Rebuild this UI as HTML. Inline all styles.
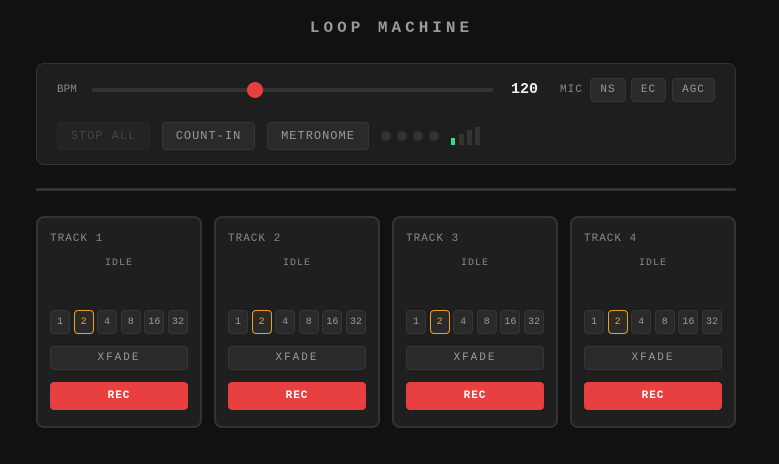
<!DOCTYPE html><html><head><style>
*{margin:0;padding:0;box-sizing:border-box}
body{width:779px;height:464px;background:#111;font-family:"Liberation Mono",monospace;position:relative;overflow:hidden;color:#888}
.a{position:absolute}
.btn{position:absolute;background:#2a2a2a;border:1px solid #363636;border-radius:4px;color:#999;font-size:11px;display:flex;align-items:center;justify-content:center;letter-spacing:1px}
.card{position:absolute;top:216px;width:166px;height:212px;background:#1f1f1f;border:2px solid #333;border-radius:8px}
</style></head><body>
<div class="a" style="left:0;width:779px;top:19px;text-align:center;font-size:16px;font-weight:bold;letter-spacing:4px;color:#999;padding-left:4px">LOOP MACHINE</div>
<div class="a" style="left:36px;top:63px;width:700px;height:102px;background:#1e1e1e;border:1px solid #333;border-radius:8px"></div>
<div class="a" style="left:57px;top:84px;font-size:11px;color:#888">BPM</div>
<div class="a" style="left:92px;top:88px;width:401px;height:4px;background:#333;border-radius:2px"></div>
<div class="a" style="left:247px;top:82px;width:16px;height:16px;background:#e84040;border-radius:50%"></div>
<div class="a" style="left:511px;top:81px;font-size:15px;font-weight:bold;color:#eee">120</div>
<div class="a" style="left:560px;top:84px;font-size:11px;color:#888;letter-spacing:1px">MIC</div>
<div class="btn" style="left:590px;top:78px;width:36px;height:24px">NS</div>
<div class="btn" style="left:631px;top:78px;width:35px;height:24px">EC</div>
<div class="btn" style="left:672px;top:78px;width:43px;height:24px">AGC</div>
<div class="btn" style="left:57px;top:122px;width:93px;height:28px;background:#232323;border-color:#282828;color:#444;font-size:12px">STOP ALL</div>
<div class="btn" style="left:162px;top:122px;width:93px;height:28px;font-size:12px">COUNT-IN</div>
<div class="btn" style="left:267px;top:122px;width:102px;height:28px;font-size:12px">METRONOME</div>
<div class="a" style="left:381px;top:131px;width:10px;height:10px;border-radius:50%;background:#333"></div>
<div class="a" style="left:397px;top:131px;width:10px;height:10px;border-radius:50%;background:#333"></div>
<div class="a" style="left:413px;top:131px;width:10px;height:10px;border-radius:50%;background:#333"></div>
<div class="a" style="left:429px;top:131px;width:10px;height:10px;border-radius:50%;background:#333"></div>
<div class="a" style="left:451px;top:138px;width:4px;height:7px;background:#3ddc84"></div>
<div class="a" style="left:459px;top:134px;width:5px;height:11px;background:#333"></div>
<div class="a" style="left:467px;top:130px;width:5px;height:15px;background:#333"></div>
<div class="a" style="left:475px;top:127px;width:5px;height:18px;background:#333"></div>
<div class="a" style="left:36px;top:188px;width:700px;height:3px;background:#333;border-radius:2px"></div>
<div id="t"></div>
<script>
var h='';[36,214,392,570].forEach(function(x,i){
h+='<div class="card" style="left:'+x+'px"></div>';
h+='<div class="a" style="left:'+(x+14)+'px;top:233px;font-size:11px;letter-spacing:1px;color:#888">TRACK '+(i+1)+'</div>';
h+='<div class="a" style="left:'+x+'px;width:166px;text-align:center;top:258px;font-size:10px;letter-spacing:1px;color:#888">IDLE</div>';
['1','2','4','8','16','32'].forEach(function(n,j){var l=x+14+j*23.6;var s=j==1?'border-color:#f0a020;color:#f0a020;':'';
h+='<div class="btn" style="'+s+'left:'+l+'px;top:310px;width:20px;height:24px;font-size:10px;letter-spacing:0">'+n+'</div>';});
h+='<div class="btn" style="left:'+(x+14)+'px;top:346px;width:138px;height:24px;font-size:11px;letter-spacing:2px">XFADE</div>';
h+='<div class="btn" style="left:'+(x+14)+'px;top:382px;width:138px;height:28px;background:#e84040;border-color:#e84040;color:#fff;font-weight:bold;font-size:11px">REC</div>';
});document.getElementById('t').innerHTML=h;
</script>
</body></html>
